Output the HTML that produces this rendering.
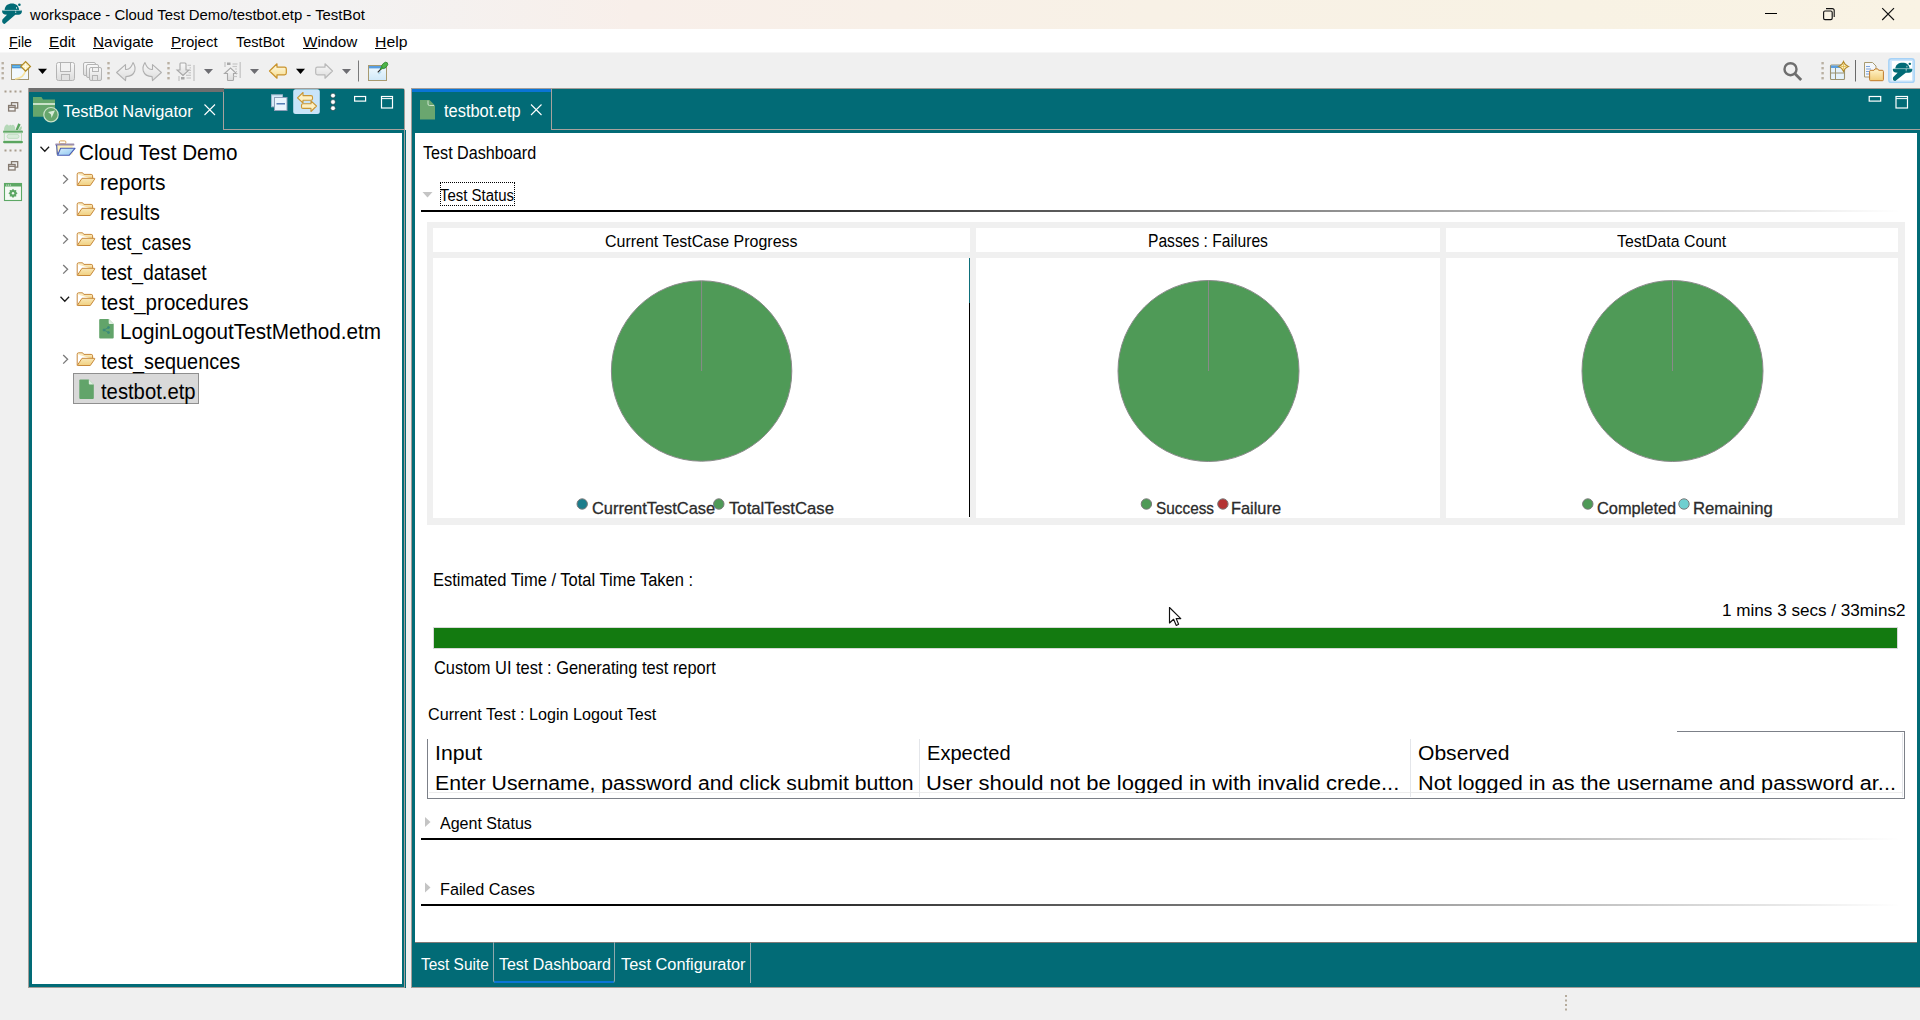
<!DOCTYPE html>
<html><head><meta charset="utf-8">
<style>
html,body{margin:0;padding:0}
body{width:1920px;height:1020px;overflow:hidden;position:relative;background:#f0f0f0;font-family:"Liberation Sans",sans-serif}
.a{position:absolute}
.t{position:absolute;white-space:nowrap;line-height:1;transform-origin:0 0}
.t u{text-decoration:underline;text-underline-offset:1px;text-decoration-thickness:1px}
svg{position:absolute;overflow:visible}
</style></head><body>
<!-- title bar -->
<div class="a" style="left:0;top:0;width:1920px;height:29px;background:linear-gradient(90deg,#f3f3f3 0%,#f3f2f2 18%,#f8efea 33%,#f8f1e6 60%,#f8f2e4 82%,#f9f3e4 100%)"></div>
<!-- menu bar -->
<div class="a" style="left:0;top:29px;width:1920px;height:23px;background:#fff"></div>
<div class="a" style="left:0;top:52px;width:1920px;height:1px;background:#f7f7f7"></div>

<!-- navigator panel -->
<div class="a" style="left:28px;top:88px;width:377px;height:900px;background:#a39d98;border-top-right-radius:3px"></div>
<div class="a" style="left:405px;top:130px;width:1px;height:858px;background:#026b76"></div>
<div class="a" style="left:29px;top:89px;width:375px;height:898px;background:#026b76"></div>
<div class="a" style="left:29px;top:88px;width:195px;height:4px;background:#6f6f6f"></div>
<div class="a" style="left:223px;top:92px;width:1px;height:38px;background:#a8a29d"></div>
<div class="a" style="left:223px;top:129px;width:181px;height:1px;background:#a8a29d"></div>
<div class="a" style="left:32px;top:133px;width:370px;height:851px;background:#fff"></div>
<!-- selection in tree -->
<div class="a" style="left:73px;top:373px;width:124px;height:29px;background:#d9d9d9;border:1px solid #8f8f8f"></div>

<!-- editor panel -->
<div class="a" style="left:411px;top:88px;width:1509px;height:900px;background:#a39d98"></div>
<div class="a" style="left:412px;top:89px;width:1508px;height:898px;background:#026b76"></div>
<div class="a" style="left:412px;top:89px;width:139px;height:3px;background:#0a74d6"></div>
<div class="a" style="left:551px;top:89px;width:1px;height:41px;background:#a8a29d"></div>
<div class="a" style="left:551px;top:129px;width:1369px;height:1px;background:#a8a29d"></div>
<div class="a" style="left:415px;top:133px;width:1502px;height:809px;background:#fff"></div>
<div class="a" style="left:415px;top:942px;width:1502px;height:1px;background:#7f7a78"></div>

<!-- dashboard lines -->
<div class="a" style="left:421px;top:210px;width:1480px;height:2px;background:linear-gradient(90deg,#000 0%,#000 12%,rgba(0,0,0,0) 100%)"></div>
<div class="a" style="left:421px;top:838px;width:1480px;height:2px;background:linear-gradient(90deg,#000 0%,#000 12%,rgba(0,0,0,0) 100%)"></div>
<div class="a" style="left:421px;top:904px;width:1480px;height:2px;background:linear-gradient(90deg,#000 0%,#000 12%,rgba(0,0,0,0) 100%)"></div>
<!-- focus rect -->
<div class="a" style="left:440px;top:182px;width:73px;height:22px;border:1px dotted #000"></div>
<!-- twisties -->
<svg style="left:0;top:0" width="1920" height="1020">
<path d="M422.5 192 L432.5 192 L427.5 197.5 Z" fill="#c4c4c4"/>
<path d="M425 817 L430.5 822 L425 827 Z" fill="#c4c4c4"/>
<path d="M425 882.5 L430.5 887.5 L425 892.5 Z" fill="#c4c4c4"/>
</svg>

<!-- charts -->
<div class="a" style="left:427px;top:222px;width:1478px;height:303px;background:#f0f0f0"></div>
<div class="a" style="left:433px;top:228px;width:537px;height:24px;background:#fff"></div>
<div class="a" style="left:433px;top:258px;width:537px;height:260px;background:#fff"></div>
<div class="a" style="left:976px;top:228px;width:464px;height:24px;background:#fff"></div>
<div class="a" style="left:976px;top:258px;width:464px;height:260px;background:#fff"></div>
<div class="a" style="left:1446px;top:228px;width:452px;height:24px;background:#fff"></div>
<div class="a" style="left:1446px;top:258px;width:452px;height:260px;background:#fff"></div>
<div class="a" style="left:969px;top:258px;width:1px;height:45px;background:#0e6f7a"></div>
<div class="a" style="left:969px;top:303px;width:1px;height:214px;background:#000"></div>
<svg style="left:0;top:0" width="1920" height="1020">
<g stroke="#8a8a8a" stroke-width="1" fill="#4f9a57">
<circle cx="701.6" cy="371" r="90.2"/>
<circle cx="1208.5" cy="371" r="90.5"/>
<circle cx="1672.5" cy="371" r="90.5"/>
</g>
<g stroke="#8a8a8a" stroke-width="1">
<line x1="701.6" y1="281" x2="701.6" y2="371"/>
<line x1="1208.5" y1="281" x2="1208.5" y2="371"/>
<line x1="1672.5" y1="281" x2="1672.5" y2="371"/>
</g>
<g stroke="#7a7a7a" stroke-width="1">
<circle cx="582.2" cy="504" r="5.2" fill="#1b7d8c"/>
<circle cx="718.8" cy="504" r="5.2" fill="#4f9a57"/>
<circle cx="1146.4" cy="504" r="5.2" fill="#4f9a57"/>
<circle cx="1222.9" cy="504" r="5.2" fill="#b43434"/>
<circle cx="1587.8" cy="504" r="5.2" fill="#4f9a57"/>
<circle cx="1684" cy="504" r="5.2" fill="#6fcfd0"/>
</g>
</svg>

<!-- progress bar -->
<div class="a" style="left:433px;top:627px;width:1465px;height:22px;background:#d8d8d8"></div>
<div class="a" style="left:434px;top:628px;width:1463px;height:20px;background:#137a10"></div>

<!-- table -->
<div class="a" style="left:427px;top:739px;width:1px;height:60px;background:#7c8088"></div>
<div class="a" style="left:427px;top:798px;width:1478px;height:1px;background:#7c8088"></div>
<div class="a" style="left:1904px;top:731px;width:1px;height:68px;background:#7c8088"></div>
<div class="a" style="left:1677px;top:731px;width:1228px;height:1px;background:#7c8088;width:228px"></div>
<div class="a" style="left:429px;top:792px;width:1473px;height:1px;background:#ececec"></div>
<div class="a" style="left:919px;top:739px;width:1px;height:58px;background:#e4e6ea"></div>
<div class="a" style="left:1410px;top:739px;width:1px;height:58px;background:#e4e6ea"></div>
<div class="a" style="left:1902px;top:733px;width:1px;height:60px;background:#e4e6ea"></div>

<!-- bottom tabs -->
<div class="a" style="left:493px;top:942px;width:120px;height:40px;border:1px solid #8fa9ad;border-top:none;border-radius:0 0 3px 3px"></div>
<div class="a" style="left:494px;top:981px;width:120px;height:2px;background:#0a74d6;border-radius:1px"></div>
<div class="a" style="left:750px;top:943px;width:1px;height:40px;background:#8fa9ad"></div>

<svg style="left:0;top:0" width="1920" height="1020">
<defs>
<linearGradient id="gWin" x1="0" y1="0" x2="0" y2="1"><stop offset="0" stop-color="#f4fbff"/><stop offset="1" stop-color="#cfe8f8"/></linearGradient>
<linearGradient id="gGray" x1="0" y1="0" x2="0" y2="1"><stop offset="0" stop-color="#fafafa"/><stop offset="1" stop-color="#dcdcdc"/></linearGradient>
<linearGradient id="gYel" x1="0" y1="0" x2="0" y2="1"><stop offset="0" stop-color="#fffbe6"/><stop offset="1" stop-color="#f6dc8e"/></linearGradient>
<linearGradient id="gFold" x1="0" y1="0" x2="0" y2="1"><stop offset="0" stop-color="#fff4cc"/><stop offset="1" stop-color="#f2cd78"/></linearGradient>
<g id="logo">
 <path d="M4.6 10.2 C4.8 5.6 8 3.6 12 3.6 C16 3.6 18.6 5.6 19.2 10.2 Z" fill="#026b76"/>
 <path d="M2 10.6 L22 10.6 C22 13.6 20.5 14.8 18.5 14.8 L15.3 14.8 L4.6 24 C2.6 23.6 1.6 22 2.4 19.6 L7 14.8 C3.6 14.8 2 13.6 2 10.6 Z" fill="#026b76"/>
 <circle cx="19.4" cy="4.8" r="1.3" fill="#026b76"/>
 <rect x="2.5" y="9.9" width="19" height="0.8" fill="#8fbfc3"/>
 <rect x="16" y="7" width="0.9" height="1.8" fill="#b9d8da"/>
 <rect x="15.2" y="10.4" width="1" height="1" fill="#e8f2f2"/>
 <rect x="15.2" y="12" width="1" height="1" fill="#b9d8da"/>
</g>
</defs>
<!-- title logo -->
<use href="#logo" x="0" y="0"/>
<!-- window controls -->
<line x1="1765" y1="13.5" x2="1777" y2="13.5" stroke="#000" stroke-width="1"/>
<rect x="1823.6" y="11" width="8.6" height="8.6" rx="1.4" fill="none" stroke="#111" stroke-width="1.15"/>
<path d="M1826 8.6 h6.2 a2 2 0 0 1 2 2 v6.4" fill="none" stroke="#111" stroke-width="1.1"/>
<path d="M1882.2 8.2 L1894 20 M1894 8.2 L1882.2 20" stroke="#111" stroke-width="1.15"/>

<!-- toolbar grips -->
<g fill="#b9b0a2">
 <rect x="1.5" y="62" width="2.4" height="2.4"/><rect x="1.5" y="67" width="2.4" height="2.4"/><rect x="1.5" y="72" width="2.4" height="2.4"/><rect x="1.5" y="77" width="2.4" height="2.4"/>
 <rect x="107.3" y="62" width="2.4" height="2.4"/><rect x="107.3" y="67" width="2.4" height="2.4"/><rect x="107.3" y="72" width="2.4" height="2.4"/><rect x="107.3" y="77" width="2.4" height="2.4"/>
 <rect x="167.3" y="62" width="2.4" height="2.4"/><rect x="167.3" y="67" width="2.4" height="2.4"/><rect x="167.3" y="72" width="2.4" height="2.4"/><rect x="167.3" y="77" width="2.4" height="2.4"/>
 <rect x="1821.4" y="62" width="2.4" height="2.4"/><rect x="1821.4" y="67" width="2.4" height="2.4"/><rect x="1821.4" y="72" width="2.4" height="2.4"/><rect x="1821.4" y="77" width="2.4" height="2.4"/>
</g>
<!-- new icon -->
<rect x="11.5" y="64.5" width="17" height="15" fill="#f2f9fd" stroke="#a39772" stroke-width="1"/>
<rect x="12" y="65" width="16" height="3.3" fill="#4a94d6"/>
<rect x="12.5" y="65.8" width="10" height="1.2" fill="#66bde8"/>
<path d="M15 79 Q24 78 25.5 70.5" fill="none" stroke="#f6e3a0" stroke-width="1.5"/>
<path d="M25.6 61.60000000000001 Q28.00 64.00 30.400000000000002 66.4 Q28.00 68.80 25.6 71.2 Q23.20 68.80 20.8 66.4 Q23.20 64.00 25.6 61.60000000000001 Z" fill="#fbeec0" stroke="#b08a25" stroke-width="1.3"/>
<path d="M25.6 63.6 v5.6 M22.8 66.4 h5.6" stroke="#fffbe8" stroke-width="1"/>
<!-- dropdowns -->
<path d="M38 68.8 L47 68.8 L42.5 74 Z" fill="#000"/>
<path d="M204 69 L213 69 L208.5 74 Z" fill="#6d6d72"/>
<path d="M250 69 L259 69 L254.5 74 Z" fill="#6d6d72"/>
<path d="M296 68.8 L305 68.8 L300.5 74 Z" fill="#000"/>
<path d="M342 69 L351 69 L346.5 74 Z" fill="#6d6d72"/>
<!-- save -->
<g stroke="#b4b4b4" stroke-width="1" fill="url(#gGray)">
 <rect x="56.5" y="62.5" width="18" height="18" rx="2"/>
 <rect x="60.5" y="62.5" width="10" height="9" fill="#f2f2f2"/>
 <rect x="61.5" y="74.5" width="8" height="6" fill="#e2e2e2"/>
</g>
<g stroke="#b4b4b4" stroke-width="1" fill="url(#gGray)">
 <rect x="83.5" y="62.5" width="12" height="13" rx="1.5"/>
 <rect x="86.5" y="64.5" width="12" height="13" rx="1.5"/>
 <rect x="89.5" y="67.5" width="12" height="13" rx="1.5"/>
 <rect x="92.5" y="67.5" width="6" height="4" fill="#f2f2f2"/>
 <rect x="92.5" y="75.5" width="5" height="5" fill="#e2e2e2"/>
</g>
<!-- undo / redo -->
<path d="M116.6 72.5 L125.5 64.6 L125.5 69.4 Q130.5 70.2 133 62.6 Q135.8 66.5 134.7 71 Q133 76.5 125.9 76.6 L125.5 80.6 Z" fill="url(#gGray)" stroke="#b0b0b0" stroke-width="1.1" stroke-linejoin="round"/>
<path d="M161.4 72.5 L152.5 64.6 L152.5 69.4 Q147.5 70.2 145 62.6 Q142.2 66.5 143.3 71 Q145 76.5 152.1 76.6 L152.5 80.6 Z" fill="url(#gGray)" stroke="#b0b0b0" stroke-width="1.1" stroke-linejoin="round"/>
<!-- next / prev annotation -->
<path d="M180.5 63 h4.5 q1 0 1 1 v6 h3 l-6 5.5 l-6 -5.5 h3 v-6 q0 -1 0.5 -1 z" fill="url(#gGray)" stroke="#a8a8a8" stroke-width="1.1"/>
<g stroke="#c6c6c6" stroke-width="1.2"><line x1="187.5" y1="65.3" x2="191" y2="65.3"/><line x1="189.5" y1="67.8" x2="191" y2="67.8"/><line x1="189" y1="70.3" x2="191" y2="70.3"/><line x1="188.5" y1="72.8" x2="191" y2="72.8"/><line x1="186" y1="75.3" x2="191" y2="75.3"/><line x1="186.5" y1="78" x2="191" y2="78"/></g>
<line x1="194" y1="65" x2="194" y2="81" stroke="#c8c8c8" stroke-width="1.4"/>
<line x1="179" y1="76" x2="179" y2="81" stroke="#c8c8c8" stroke-width="1.4"/>
<rect x="181" y="77" width="3.5" height="2.5" fill="#a8a8a8"/>
<path d="M228 80.5 h4.5 q1 0 1 -1 v-6 h3 l-6 -5.5 l-6 5.5 h3 v6 q0 1 0.5 1 z" fill="url(#gGray)" stroke="#a8a8a8" stroke-width="1.1"/>
<g stroke="#c6c6c6" stroke-width="1.2"><line x1="232.5" y1="64" x2="237.5" y2="64"/><line x1="232.5" y1="66.5" x2="237" y2="66.5"/><line x1="235" y1="69" x2="237" y2="69"/><line x1="236" y1="71.5" x2="237" y2="71.5"/><line x1="236" y1="74" x2="237" y2="74"/><line x1="233.5" y1="76.5" x2="237" y2="76.5"/></g>
<line x1="240.2" y1="62" x2="240.2" y2="78" stroke="#c8c8c8" stroke-width="1.4"/>
<line x1="225" y1="62" x2="225" y2="67" stroke="#c8c8c8" stroke-width="1.4"/>
<rect x="227" y="62.5" width="3.5" height="2.5" fill="#a8a8a8"/>
<!-- back / forward -->
<path d="M269.5 71 L277 63.8 L277 67.2 L284.5 67.2 Q286.3 67.2 286.3 69 L286.3 73 Q286.3 74.8 284.5 74.8 L277 74.8 L277 78.2 Z" fill="url(#gYel)" stroke="#c9932b" stroke-width="1.2" stroke-linejoin="round"/>
<path d="M332.5 71 L325 63.8 L325 67.2 L317.5 67.2 Q315.7 67.2 315.7 69 L315.7 73 Q315.7 74.8 317.5 74.8 L325 74.8 L325 78.2 Z" fill="url(#gGray)" stroke="#b9b9b9" stroke-width="1.2" stroke-linejoin="round"/>
<!-- separators -->
<line x1="358.5" y1="60.5" x2="358.5" y2="81.5" stroke="#7a7a7a" stroke-width="1"/>
<line x1="1855.5" y1="60" x2="1855.5" y2="81.5" stroke="#6a6a6a" stroke-width="1"/>
<!-- pin icon -->
<rect x="368.5" y="65.5" width="18" height="15" fill="url(#gWin)" stroke="#a89a70" stroke-width="1"/>
<rect x="369" y="66" width="17" height="2.4" fill="#5a9ee0"/>
<line x1="377.8" y1="72.3" x2="381" y2="69" stroke="#2a2a2a" stroke-width="1.1"/>
<path d="M378.5 74 L381 71.5" stroke="#9ccfe8" stroke-width="1.6" opacity="0.7"/>
<ellipse cx="384.6" cy="65.4" rx="3.8" ry="2.3" transform="rotate(-45 384.6 65.4)" fill="#4db548" stroke="#2f7d2c" stroke-width="0.7"/>
<ellipse cx="381.6" cy="68.2" rx="1.9" ry="1.2" transform="rotate(-45 381.6 68.2)" fill="#3e9a3a"/>
<!-- search -->
<circle cx="1790.5" cy="69.2" r="6" fill="none" stroke="#6e6e6e" stroke-width="2.4"/>
<line x1="1795" y1="73.8" x2="1801.2" y2="80" stroke="#6e6e6e" stroke-width="2.8" stroke-linecap="butt"/>
<!-- table icon -->
<rect x="1830.5" y="65" width="14" height="14.5" rx="1" fill="#e4f2fc" stroke="#9a9270" stroke-width="1.1"/>
<rect x="1831" y="65.5" width="13" height="2.5" fill="#5a9ee0"/>
<line x1="1835.5" y1="68" x2="1835.5" y2="79.5" stroke="#9a9270" stroke-width="1"/>
<line x1="1830.5" y1="73" x2="1844.5" y2="73" stroke="#9a9270" stroke-width="1"/>
<path d="M1843.5 61.7 Q1844.84 65.16 1848.3 66.5 Q1844.84 67.84 1843.5 71.3 Q1842.16 67.84 1838.7 66.5 Q1842.16 65.16 1843.5 61.7 Z" fill="#fdf3c8" stroke="#b38a2a" stroke-width="1.2"/><path d="M1843.5 63.5 v6 M1840.5 66.5 h6" stroke="#e0b94a" stroke-width="0.8"/>
<!-- files icon -->
<path d="M1864.5 62.5 h8 l3.5 3.5 v11 h-11.5 z" fill="#f4f7fb" stroke="#a89a70" stroke-width="1"/>
<g stroke="#6f9ad8" stroke-width="0.9"><line x1="1866" y1="66.5" x2="1870" y2="66.5"/><line x1="1866" y1="69" x2="1871" y2="69"/><line x1="1866" y1="71.5" x2="1870" y2="71.5"/><line x1="1866" y1="74" x2="1870" y2="74"/></g>
<path d="M1869.6 71.5 q0 -1.2 1.2 -1.2 h3.2 l1 -1.4 h2.8 l0.8 1.4 h3.6 q1.2 0 1.2 1.2 v8.2 q0 1 -1 1 h-11.8 q-1 0 -1 -1 z" fill="url(#gFold)" stroke="#c07a2a" stroke-width="1"/>
<!-- highlighted logo button -->
<rect x="1888.8" y="58.8" width="25.4" height="23.6" rx="2.5" fill="#cfe6fb" stroke="#a6d2f7" stroke-width="1.4"/>
<rect x="1891.8" y="61" width="20.2" height="19.4" fill="#fff"/>
<g transform="translate(1890.8 59.5) scale(0.98 0.9)"><use href="#logo"/></g>
</svg>

<svg style="left:0;top:0" width="1920" height="1020">
<defs>
<linearGradient id="gFold2" x1="0" y1="0" x2="0" y2="1"><stop offset="0" stop-color="#fff6d8"/><stop offset="1" stop-color="#f0cf7e"/></linearGradient>
<linearGradient id="gBlueF" x1="0" y1="0" x2="1" y2="1"><stop offset="0" stop-color="#d8eefc"/><stop offset="1" stop-color="#8cc6f0"/></linearGradient>
<g id="fold">
 <path d="M0.8 2.2 q0 -1.4 1.4 -1.4 h4 l1.2 1.6 h7.4 q1.4 0 1.4 1.4 v3.2" fill="url(#gFold2)" stroke="#c8893a" stroke-width="1"/>
 <path d="M0.8 2.2 v10.4 q0 0.9 0.9 0.9 h12.2 l4.4 -6.4 q0.5 -0.8 -0.5 -0.8 h-12.2 l-4.8 7.2" fill="url(#gFold2)" stroke="#c8893a" stroke-width="1" stroke-linejoin="round"/>
</g>
<g id="gfile">
 <path d="M0.5 1.5 q0 -1 1 -1 h8.5 l5 5 v13.5 q0 1 -1 1 h-12.5 q-1 0 -1 -1 z" fill="#62a46a"/>
 <path d="M10 0.5 v4 q0 1 1 1 h4 z" fill="#dfeee0"/>
</g>
</defs>
<!-- navigator tab icon -->
<path d="M33 97 h8.5 l1.5 2.5 h12 v17.3 h-22 z" fill="#66a66c"/>
<rect x="33" y="103" width="22" height="2" fill="#c9e2c9"/>
<circle cx="51" cy="114.7" r="7.2" fill="#66a66c" stroke="#c9e2c9" stroke-width="1.2"/>
<path d="M48 112 L55 110.5 L51.5 118 L51 114.5 Z" fill="#d8ecd8"/>
<!-- close X nav -->
<path d="M204.5 104.5 L215 115 M215 104.5 L204.5 115" stroke="#fff" stroke-width="1.1"/>
<!-- collapse all -->
<rect x="271.5" y="94.8" width="11" height="12" fill="#d6e9f7" stroke="#9fb6cc" stroke-width="1"/>
<rect x="274.5" y="97.5" width="12.5" height="13" fill="#eaf5fd" stroke="#8d9fb9" stroke-width="1"/>
<line x1="276.5" y1="103.8" x2="285" y2="103.8" stroke="#3a68a8" stroke-width="1.3"/>
<!-- link highlighted -->
<rect x="293.2" y="89.3" width="26.6" height="24.6" rx="2.5" fill="#c9e4f9"/>
<path d="M297.5 97.8 L303 92.5 L303 95.6 L311 95.6 Q312.5 95.6 312.5 97 L312.5 98.8 Q312.5 100.2 311 100.2 L303 100.2 L303 103 Z" fill="#fdf0c4" stroke="#c99636" stroke-width="1.1" stroke-linejoin="round"/>
<path d="M316.5 106 L311 100.8 L311 103.8 L303 103.8 Q301.5 103.8 301.5 105.2 L301.5 107 Q301.5 108.4 303 108.4 L311 108.4 L311 111.5 Z" fill="#fdf0c4" stroke="#c99636" stroke-width="1.1" stroke-linejoin="round"/>
<!-- kebab -->
<g fill="#fff" stroke="#1e3a40" stroke-width="0.6"><circle cx="333" cy="95.6" r="2.4"/><circle cx="333" cy="102" r="2.4"/><circle cx="333" cy="108.2" r="2.4"/></g>
<!-- min / max nav -->
<rect x="354.6" y="96.5" width="11" height="4.6" fill="none" stroke="#fff" stroke-width="1.2"/>
<rect x="381.5" y="96.5" width="11" height="11.5" fill="none" stroke="#fff" stroke-width="1.2"/>
<line x1="381.5" y1="98.6" x2="392.5" y2="98.6" stroke="#fff" stroke-width="1"/>
<!-- editor tab icon + close -->
<path d="M420 100 h9.5 l5.5 5.5 v14 h-15 z" fill="#6aa66f"/>
<path d="M428 100.5 v3.5 q0 1.5 1.5 1.5 h4.5" fill="#6aa66f" stroke="#d7ead7" stroke-width="0.9"/>
<path d="M531 104.5 L541.5 115 M541.5 104.5 L531 115" stroke="#fff" stroke-width="1.1"/>
<!-- editor min / max -->
<rect x="1869.2" y="96.5" width="11.5" height="4.6" fill="none" stroke="#fff" stroke-width="1.2"/>
<rect x="1896" y="96.5" width="11.5" height="11.5" fill="none" stroke="#fff" stroke-width="1.2"/>
<line x1="1896" y1="98.6" x2="1907.5" y2="98.6" stroke="#fff" stroke-width="1"/>
<!-- tree chevrons -->
<path d="M40.5 146.8 L44.8 151.2 L49.1 146.8" fill="none" stroke="#1a1a1a" stroke-width="1.3"/>
<g fill="none" stroke="#7a7a7a" stroke-width="1.3">
<path d="M63.2 175 L67.6 179.3 L63.2 183.6"/>
<path d="M63.2 205 L67.6 209.3 L63.2 213.6"/>
<path d="M63.2 235 L67.6 239.3 L63.2 243.6"/>
<path d="M63.2 265 L67.6 269.3 L63.2 273.6"/>
<path d="M63.2 355 L67.6 359.3 L63.2 363.6"/>
</g>
<path d="M60.5 296.8 L64.8 301.2 L69.1 296.8" fill="none" stroke="#1a1a1a" stroke-width="1.3"/>
<!-- root project folder -->
<g>
 <rect x="59.4" y="140.9" width="6.4" height="2.9" rx="1" fill="#fff" stroke="#d6a256" stroke-width="1"/>
 <rect x="56.2" y="145" width="16.4" height="9.5" fill="#fff1b8"/>
 <rect x="55.3" y="143.6" width="19" height="1.8" rx="0.5" fill="#9a8cab"/>
 <path d="M56.6 145 L57.4 154.6" stroke="#4d5fb0" stroke-width="1.2"/>
 <path d="M60.6 148.3 L75 148.3 L69.3 155.2 L57.6 155.2 Z" fill="url(#gBlueF)" stroke="#4a5cb4" stroke-width="1.1" stroke-linejoin="round"/>
</g>
<!-- folders -->
<use href="#fold" x="76.4" y="172"/>
<use href="#fold" x="76.4" y="202"/>
<use href="#fold" x="76.4" y="232"/>
<use href="#fold" x="76.4" y="262"/>
<use href="#fold" x="76.4" y="292"/>
<use href="#fold" x="76.4" y="352"/>
<!-- files -->
<use href="#gfile" x="98.7" y="318.5"/>
<g stroke="#3b8a7a" stroke-width="0.9" fill="#3b8a7a"><circle cx="104" cy="330" r="1"/><circle cx="108.5" cy="327.5" r="1"/><circle cx="108.5" cy="332.5" r="1"/><path d="M104 330 L108.5 327.5 M104 330 L108.5 332.5"/></g>
<use href="#gfile" x="78.8" y="379"/>
<!-- left trim strip -->
<g fill="#a89c8c">
 <rect x="4.5" y="90.5" width="2" height="2"/><rect x="9.5" y="90.5" width="2" height="2"/><rect x="14.5" y="90.5" width="2" height="2"/><rect x="19.5" y="90.5" width="2" height="2"/>
 <rect x="4.5" y="149.5" width="2" height="2"/><rect x="9.5" y="149.5" width="2" height="2"/><rect x="14.5" y="149.5" width="2" height="2"/><rect x="19.5" y="149.5" width="2" height="2"/>
</g>
<g fill="none" stroke="#857a70" stroke-width="1.3">
 <rect x="8.6" y="105.5" width="6.5" height="5.5" fill="#f0f0f0"/><path d="M11.5 105.5 v-2.8 h6.2 v5.5 h-2.6"/><line x1="8.6" y1="107.3" x2="15.1" y2="107.3"/>
 <rect x="8.6" y="164.5" width="6.5" height="5.5" fill="#f0f0f0"/><path d="M11.5 164.5 v-2.8 h6.2 v5.5 h-2.6"/><line x1="8.6" y1="166.3" x2="15.1" y2="166.3"/>
</g>
<g>
 <path d="M4 130 q0 -4 2.5 -5.5 q2 -0.5 2.5 1.5 q1 -2 2.5 -0.5 q1.5 -1.5 3 0.5 q1 1.5 0.5 4 z" fill="#a9d3ad" opacity="0.85"/>
 <path d="M15.5 130 L18.3 123.3 L20.6 124.6 L18 130 z" fill="#5aa55f"/>
 <path d="M18.5 130 q1.5 -3 3 -4 q1 2 -0.5 4 z" fill="#a9d3ad"/>
 <rect x="3" y="130.4" width="20" height="2.6" rx="1.3" fill="#62a967"/>
 <rect x="4.3" y="133" width="17.2" height="8" fill="none" stroke="#b9dcbb" stroke-width="1"/>
 <rect x="7" y="134.4" width="12" height="4" rx="2" fill="#d9ecda" stroke="#b9dcbb" stroke-width="0.8"/>
 <rect x="3" y="141" width="20" height="2.2" rx="1.1" fill="#5aa55f"/>
</g>
<g>
 <rect x="4.5" y="183.5" width="17" height="17" fill="#f4faf4" stroke="#5da865" stroke-width="1.1"/>
 <rect x="4.5" y="183.5" width="17" height="3" fill="#5da865"/>
 <circle cx="6.8" cy="185" r="0.6" fill="#fff"/><circle cx="8.6" cy="185" r="0.6" fill="#fff"/><circle cx="10.4" cy="185" r="0.6" fill="#fff"/>
 <polygon points="17.60,193.30 16.14,194.60 16.25,196.55 14.30,196.44 13.00,197.90 11.70,196.44 9.75,196.55 9.86,194.60 8.40,193.30 9.86,192.00 9.75,190.05 11.70,190.16 13.00,188.70 14.30,190.16 16.25,190.05 16.14,192.00" fill="#5da865"/>
 <circle cx="13" cy="193.3" r="1.2" fill="#f4faf4"/>
</g>
<!-- bottom grip -->
<g fill="#b5ab9c"><rect x="1565" y="995" width="2" height="2"/><rect x="1565" y="999.5" width="2" height="2"/><rect x="1565" y="1004" width="2" height="2"/><rect x="1565" y="1008.5" width="2" height="2"/></g>
</svg>

<div class="t" style="left:29.96px;top:7.08px;font-size:15.5px;color:#000;transform:scaleX(0.9612)">workspace - Cloud Test Demo/testbot.etp - TestBot</div>
<div class="t" style="left:8.82px;top:34.64px;font-size:14.6px;color:#000;transform:scaleX(0.9777)"><u>F</u>ile</div>
<div class="t" style="left:49.25px;top:34.64px;font-size:14.6px;color:#000;transform:scaleX(1.0460)"><u>E</u>dit</div>
<div class="t" style="left:93.25px;top:34.64px;font-size:14.6px;color:#000;transform:scaleX(1.0517)"><u>N</u>avigate</div>
<div class="t" style="left:171.27px;top:34.64px;font-size:14.6px;color:#000;transform:scaleX(1.0256)"><u>P</u>roject</div>
<div class="t" style="left:236.40px;top:34.64px;font-size:14.6px;color:#000;transform:scaleX(0.9956)">TestBot</div>
<div class="t" style="left:303.10px;top:34.64px;font-size:14.6px;color:#000;transform:scaleX(1.0465)"><u>W</u>indow</div>
<div class="t" style="left:375.12px;top:34.64px;font-size:14.6px;color:#000;transform:scaleX(1.0797)"><u>H</u>elp</div>
<div class="t" style="left:63.00px;top:103.57px;font-size:16.93px;color:#fff;transform:scaleX(0.9707)">TestBot Navigator</div>
<div class="t" style="left:444.00px;top:102.89px;font-size:17.5px;color:#fff;transform:scaleX(0.9384)">testbot.etp</div>
<div class="t" style="left:79.46px;top:141.88px;font-size:22px;color:#000;transform:scaleX(0.9409)">Cloud Test Demo</div>
<div class="t" style="left:99.54px;top:171.68px;font-size:22px;color:#000;transform:scaleX(0.9560)">reports</div>
<div class="t" style="left:99.58px;top:201.68px;font-size:22px;color:#000;transform:scaleX(0.9248)">results</div>
<div class="t" style="left:100.50px;top:231.78px;font-size:22px;color:#000;transform:scaleX(0.8567)">test_cases</div>
<div class="t" style="left:100.50px;top:261.68px;font-size:22px;color:#000;transform:scaleX(0.8810)">test_dataset</div>
<div class="t" style="left:100.50px;top:291.68px;font-size:22px;color:#000;transform:scaleX(0.9350)">test_procedures</div>
<div class="t" style="left:120.26px;top:321.48px;font-size:22px;color:#000;transform:scaleX(0.9400)">LoginLogoutTestMethod.etm</div>
<div class="t" style="left:100.50px;top:351.28px;font-size:22px;color:#000;transform:scaleX(0.9026)">test_sequences</div>
<div class="t" style="left:100.50px;top:381.28px;font-size:22px;color:#000;transform:scaleX(0.9200)">testbot.etp</div>
<div class="t" style="left:423.00px;top:145.13px;font-size:17.68px;color:#000;transform:scaleX(0.9142)">Test Dashboard</div>
<div class="t" style="left:440.40px;top:187.26px;font-size:17.06px;color:#000;transform:scaleX(0.8783)">Test Status</div>
<div class="t" style="left:605.40px;top:232.78px;font-size:16.45px;color:#000;transform:scaleX(0.9726)">Current TestCase Progress</div>
<div class="t" style="left:1147.85px;top:232.91px;font-size:17.47px;color:#000;transform:scaleX(0.8957)">Passes : Failures</div>
<div class="t" style="left:1616.80px;top:233.02px;font-size:17.34px;color:#000;transform:scaleX(0.9146)">TestData Count</div>
<div class="t" style="left:591.90px;top:500.49px;font-size:16.2px;color:#2b2b2b;transform:scaleX(1.0136);-webkit-text-stroke:0.3px #2b2b2b">CurrentTestCase</div>
<div class="t" style="left:729.00px;top:500.49px;font-size:16.2px;color:#2b2b2b;transform:scaleX(1.0328);-webkit-text-stroke:0.3px #2b2b2b">TotalTestCase</div>
<div class="t" style="left:1155.80px;top:500.49px;font-size:16.2px;color:#2b2b2b;transform:scaleX(0.9487);-webkit-text-stroke:0.3px #2b2b2b">Success</div>
<div class="t" style="left:1230.99px;top:500.49px;font-size:16.2px;color:#2b2b2b;transform:scaleX(1.0108);-webkit-text-stroke:0.3px #2b2b2b">Failure</div>
<div class="t" style="left:1596.80px;top:500.49px;font-size:16.2px;color:#2b2b2b;transform:scaleX(1.0119);-webkit-text-stroke:0.3px #2b2b2b">Completed</div>
<div class="t" style="left:1692.57px;top:500.49px;font-size:16.2px;color:#2b2b2b;transform:scaleX(1.0308);-webkit-text-stroke:0.3px #2b2b2b">Remaining</div>
<div class="t" style="left:432.82px;top:571.86px;font-size:17.88px;color:#000;transform:scaleX(0.9251)">Estimated Time / Total Time Taken :</div>
<div class="t" style="left:1721.96px;top:601.78px;font-size:16.45px;color:#000;transform:scaleX(1.0407)">1 mins 3 secs / 33mins2</div>
<div class="t" style="left:433.50px;top:659.91px;font-size:17.47px;color:#000;transform:scaleX(0.9400)">Custom UI test : Generating test report</div>
<div class="t" style="left:427.50px;top:706.81px;font-size:16.65px;color:#000;transform:scaleX(0.9701)">Current Test : Login Logout Test</div>
<div class="t" style="left:434.54px;top:742.77px;font-size:20px;color:#000;transform:scaleX(1.0609)">Input</div>
<div class="t" style="left:926.50px;top:742.67px;font-size:20px;color:#000;transform:scaleX(1.0029)">Expected</div>
<div class="t" style="left:1417.80px;top:742.67px;font-size:20px;color:#000;transform:scaleX(1.0539)">Observed</div>
<div class="t" style="left:434.54px;top:772.77px;font-size:20px;color:#000;transform:scaleX(1.0606)">Enter Username, password and click submit button</div>
<div class="t" style="left:926.20px;top:772.77px;font-size:20px;color:#000;transform:scaleX(1.1001)">User should not be logged in with invalid crede...</div>
<div class="t" style="left:1417.52px;top:772.77px;font-size:20px;color:#000;transform:scaleX(1.0828)">Not logged in as the username and password ar...</div>
<div class="t" style="left:440.20px;top:815.82px;font-size:16.52px;color:#000;transform:scaleX(0.9712)">Agent Status</div>
<div class="t" style="left:439.54px;top:881.87px;font-size:16.93px;color:#000;transform:scaleX(0.9600)">Failed Cases</div>
<div class="t" style="left:420.60px;top:956.77px;font-size:16.93px;color:#fff;transform:scaleX(0.9121)">Test Suite</div>
<div class="t" style="left:499.00px;top:956.77px;font-size:16.93px;color:#fff;transform:scaleX(0.9441)">Test Dashboard</div>
<div class="t" style="left:620.50px;top:956.77px;font-size:16.93px;color:#fff;transform:scaleX(0.9666)">Test Configurator</div>

<!--POST-->
<!-- clip descenders of table rows -->
<div class="a" style="left:429px;top:793px;width:1473px;height:5px;background:#fff"></div>
<div class="a" style="left:919px;top:793px;width:1px;height:4px;background:#e4e6ea"></div>
<div class="a" style="left:1410px;top:793px;width:1px;height:4px;background:#e4e6ea"></div>
<div class="a" style="left:1902px;top:793px;width:1px;height:4px;background:#e4e6ea"></div>
<!-- mouse cursor -->
<svg style="left:0;top:0" width="1920" height="1020">
<path d="M1169.5 607.5 L1169.5 623 L1173.6 619.3 L1176.3 625.4 L1178.6 624.3 L1176.2 618.6 L1180.8 618.6 Z" fill="#fff" stroke="#111" stroke-width="1.15" stroke-linejoin="round"/>
</svg>
</body></html>
